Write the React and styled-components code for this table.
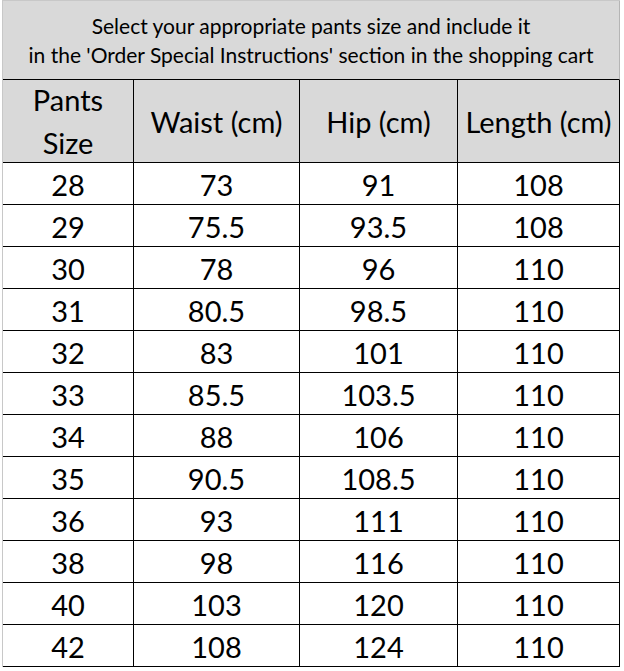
import React from "react";
import styled, { createGlobalStyle } from "styled-components";

const rows = [
  ["28", "73", "91", "108"],
  ["29", "75.5", "93.5", "108"],
  ["30", "78", "96", "110"],
  ["31", "80.5", "98.5", "110"],
  ["32", "83", "101", "110"],
  ["33", "85.5", "103.5", "110"],
  ["34", "88", "106", "110"],
  ["35", "90.5", "108.5", "110"],
  ["36", "93", "111", "110"],
  ["38", "98", "116", "110"],
  ["40", "103", "120", "110"],
  ["42", "108", "124", "110"],
];

const GlobalStyle = createGlobalStyle`
  html, body {
    margin: 0;
    padding: 0;
    background: #ffffff;
  }
  body {
    font-family: Lato, "Open Sans", sans-serif;
    color: #000;
  }
`;

const Sheet = styled.div`
  width: 624px;
  height: 671px;
  overflow: hidden;
  background: #ffffff;
  padding-left: 2px;
  box-sizing: border-box;
`;

const Table = styled.div`
  display: grid;
  grid-template-columns: 131px 166px 158px 162px;
  width: 618px;
  border-left: 1px solid #c8c8c8;
  border-top: 1px solid #c8c8c8;
  box-sizing: border-box;
`;

const Title = styled.div`
  grid-column: 1 / -1;
  height: 79px;
  box-sizing: border-box;
  background: #d9d9d9;
  border-bottom: 1px solid #000;
  border-right: 1px solid #b5b5b5;
  display: flex;
  flex-direction: column;
  align-items: center;
  justify-content: center;
  font-size: 21px;
  line-height: 29px;
  padding-bottom: 1px;
  text-align: center;
`;

const Cell = styled.div`
  box-sizing: border-box;
  height: ${(p) => (p.$head ? "83px" : "42px")};
  background: ${(p) => (p.$head ? "#d9d9d9" : "#ffffff")};
  border-right: 1px solid #000;
  border-bottom: 1px solid #000;
  display: flex;
  align-items: center;
  justify-content: center;
  text-align: center;
  font-size: 29px;
  line-height: ${(p) => (p.$head ? "43px" : "42px")};
  padding-top: ${(p) => (p.$head ? "0" : "2px")};
  white-space: nowrap;
`;

export default function App() {
  return (
    <>
      <GlobalStyle />
      <Sheet>
        <Table>
          <Title>
            <span>Select your appropriate pants size and include it</span>
            <span>
              in the 'Order Special Instructions' section in the shopping cart
            </span>
          </Title>
          <Cell $head>
            Pants
            <br />
            Size
          </Cell>
          <Cell $head>Waist (cm)</Cell>
          <Cell $head>Hip (cm)</Cell>
          <Cell $head>Length (cm)</Cell>
          {rows.map((r) =>
            r.map((v, i) => <Cell key={r[0] + "-" + i}>{v}</Cell>)
          )}
        </Table>
      </Sheet>
    </>
  );
}
